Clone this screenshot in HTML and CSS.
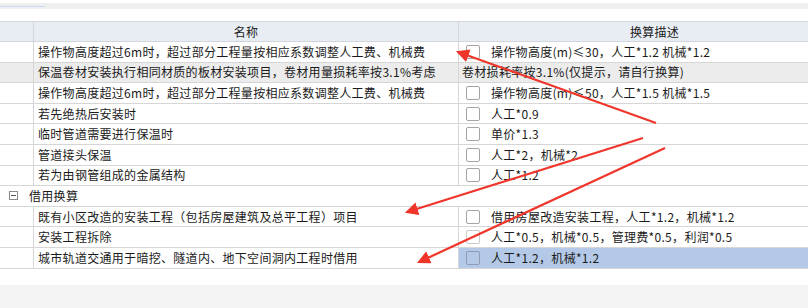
FILE: index.html
```html
<!DOCTYPE html>
<html lang="zh-CN">
<head>
    <meta charset="UTF-8">
    <title>换算</title>
    <link rel="stylesheet" href="styles.css">
</head>
<body>
    <div class="page">
        <div class="topbar"><div class="thumb"></div></div>

        <div class="table">
            <div class="row head">
                <div class="cell"></div>
                <div class="cell name center">名称</div>
                <div class="cell desc center">换算描述</div>
            </div>
            <div class="row">
                <div class="cell"></div>
                <div class="cell name">操作物高度超过6m时，超过部分工程量按相应系数调整人工费、机械费</div>
                <div class="cell desc"><span class="check"></span>操作物高度(m)≤30，人工*1.2 机械*1.2</div>
            </div>
            <div class="row gray">
                <div class="cell"></div>
                <div class="cell name">保温卷材安装执行相同材质的板材安装项目，卷材用量损耗率按3.1%考虑</div>
                <div class="cell desc plain">卷材损耗率按3.1%(仅提示，请自行换算)</div>
            </div>
            <div class="row">
                <div class="cell"></div>
                <div class="cell name">操作物高度超过6m时，超过部分工程量按相应系数调整人工费、机械费</div>
                <div class="cell desc"><span class="check"></span>操作物高度(m)≤50，人工*1.5 机械*1.5</div>
            </div>
            <div class="row">
                <div class="cell"></div>
                <div class="cell name">若先绝热后安装时</div>
                <div class="cell desc"><span class="check"></span>人工*0.9</div>
            </div>
            <div class="row">
                <div class="cell"></div>
                <div class="cell name">临时管道需要进行保温时</div>
                <div class="cell desc"><span class="check"></span>单价*1.3</div>
            </div>
            <div class="row">
                <div class="cell"></div>
                <div class="cell name">管道接头保温</div>
                <div class="cell desc"><span class="check"></span>人工*2，机械*2</div>
            </div>
            <div class="row">
                <div class="cell"></div>
                <div class="cell name">若为由钢管组成的金属结构</div>
                <div class="cell desc"><span class="check"></span>人工*1.2</div>
            </div>
            <div class="row group">
                <span class="toggle"></span>借用换算
            </div>
            <div class="row">
                <div class="cell"></div>
                <div class="cell name">既有小区改造的安装工程（包括房屋建筑及总平工程）项目</div>
                <div class="cell desc"><span class="check"></span>借用房屋改造安装工程，人工*1.2，机械*1.2</div>
            </div>
            <div class="row">
                <div class="cell"></div>
                <div class="cell name">安装工程拆除</div>
                <div class="cell desc"><span class="check faded"></span>人工*0.5，机械*0.5，管理费*0.5，利润*0.5</div>
            </div>
            <div class="row">
                <div class="cell"></div>
                <div class="cell name">城市轨道交通用于暗挖、隧道内、地下空间洞内工程时借用</div>
                <div class="cell desc selected"><span class="check"></span>人工*1.2，机械*1.2</div>
            </div>
        </div>

        <div class="footer"></div>

        <svg class="arrows" width="808" height="308" viewBox="0 0 808 308">
            <defs>
                <marker id="head" markerWidth="6" markerHeight="6" refX="5" refY="3" orient="auto" markerUnits="strokeWidth">
                    <path d="M0,0 L6,3 L0,6 Z" fill="#f0352b"/>
                </marker>
            </defs>
            <line x1="656" y1="123" x2="458" y2="52" stroke="#f0352b" stroke-width="2.2" marker-end="url(#head)"/>
            <line x1="643" y1="138" x2="407" y2="212" stroke="#f0352b" stroke-width="2.2" marker-end="url(#head)"/>
            <line x1="665" y1="148" x2="419" y2="262" stroke="#f0352b" stroke-width="2.2" marker-end="url(#head)"/>
        </svg>
    </div>
</body>
</html>
```

FILE: styles.css
```css
body {
    margin: 0;
    background: #fff;
    font-family: "Noto Sans CJK SC", "Noto Sans", sans-serif;
    font-size: 12px;
    letter-spacing: 0.3px;
    color: #1a1a1a;
}

.page {
    position: relative;
    width: 808px;
    height: 308px;
    overflow: hidden;
}

.topbar {
    margin-top: 3px;
    height: 6px;
    background: #efefef;
    margin-bottom: 12px;
    padding-top: 3px;
    box-sizing: border-box;
}

.thumb {
    width: 45px;
    height: 1px;
    background: #c8dcf2;
}

/* the grid runs on past the right edge of the window */
.table {
    width: 850px;
    border-top: 1px solid #d8d8d8;
}

.row {
    display: grid;
    grid-template-columns: 33px 425px 1fr;
    height: 20.6px;
    border-bottom: 1px solid #d6d6d6;
    box-sizing: border-box;
}

.row.head {
    height: 20px;
    background: #e8edf4;
    border-bottom-color: #d2d6dc;
}

.row.gray {
    background: #ececec;
}

.cell {
    display: flex;
    align-items: center;
    white-space: nowrap;
    overflow: hidden;
    line-height: 1;
}

.cell.name,
.cell.desc {
    border-left: 1px solid #d6d6d6;
}

.cell.name {
    padding-left: 4px;
}

.cell.desc {
    padding-left: 7px;
}

.cell.desc.plain {
    padding-left: 3px;
}

.cell.center {
    justify-content: center;
    padding-left: 0;
}

.cell.selected {
    background: #b4c9e7;
}

.check {
    width: 12px;
    height: 12px;
    border: 1px solid #a4a4a4;
    border-radius: 2px;
    background: #fff;
    margin-right: 11px;
    flex: none;
}

.check.faded {
    border-color: #c8c8c8;
}

.selected .check {
    background: transparent;
    border-color: #8e9db4;
}

.row.group {
    display: flex;
    align-items: center;
    padding-left: 9px;
    border-bottom: 1px solid #d6d6d6;
}

.toggle {
    width: 7px;
    height: 7px;
    border: 1px solid #8a8a8a;
    margin-right: 11px;
    position: relative;
}

.toggle::after {
    content: "";
    position: absolute;
    left: 1px;
    right: 1px;
    top: 3px;
    height: 1px;
    background: #555;
}

.footer {
    position: absolute;
    left: 0;
    right: 0;
    top: 285px;
    bottom: 0;
    background: #f4f4f4;
}

.arrows {
    position: absolute;
    left: 0;
    top: 0;
}
```
